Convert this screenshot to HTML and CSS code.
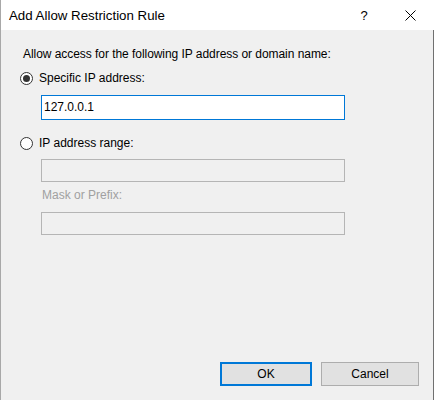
FILE: index.html
```html
<!DOCTYPE html>
<html>
<head>
<meta charset="utf-8">
<link rel="stylesheet" href="styles.css">
</head>
<body>
<div class="window">
  <div class="titlebar">
    <span class="title">Add Allow Restriction Rule</span>
    <span class="help">?</span>
    <span class="close">
      <svg width="11" height="11" viewBox="0 0 11 11"><path d="M0.5 0.5 L10.5 10.5 M10.5 0.5 L0.5 10.5" stroke="#000" stroke-width="1" fill="none"/></svg>
    </span>
  </div>
  <div class="body">
    <div class="form">
      <p class="prompt">Allow access for the following IP address or domain name:</p>
      <label class="radio"><span class="circle checked"></span><span>Specific IP address:</span></label>
      <div class="field active">127.0.0.1</div>
      <label class="radio second"><span class="circle"></span><span>IP address range:</span></label>
      <div class="field disabled first-range"></div>
      <p class="sub">Mask or Prefix:</p>
      <div class="field disabled mask"></div>
    </div>
    <div class="buttons">
      <button class="btn ok">OK</button>
      <button class="btn cancel">Cancel</button>
    </div>
  </div>
</div>
</body>
</html>
```
FILE: styles.css
```css
* { box-sizing: border-box; }
html, body { margin: 0; padding: 0; }
body {
  font-family: "Liberation Sans", Arial, sans-serif;
  font-size: 12px;
  color: #000;
  background: #f0f0f0;
}
.window {
  width: 434px;
  height: 400px;
  border-left: 1px solid #a8a8a8;
  display: flex;
  flex-direction: column;
  background: #f0f0f0;
}
.titlebar {
  height: 30px;
  background: #fff;
  display: flex;
  align-items: center;
  padding-left: 8px;
  flex: none;
}
.title {
  flex: 1;
  font-size: 13.3px;
}
.help {
  width: 46px;
  text-align: center;
  font-size: 13px;
  margin-right: 0;
}
.close {
  width: 46px;
  display: flex;
  justify-content: center;
  margin-right: 1px;
}
.body {
  flex: 1;
  display: flex;
  flex-direction: column;
  border-right: 1px solid #707070;
  padding: 16px 14px 14px 19px;
}
.form {
  display: flex;
  flex-direction: column;
  align-items: flex-start;
}
.prompt {
  margin: 0 0 8px 3px;
  line-height: 16px;
  letter-spacing: -0.05px;
}
.radio {
  display: flex;
  align-items: center;
  gap: 6px;
  line-height: 16px;
}
.radio.second { margin-top: 15px; }
.circle {
  width: 13px;
  height: 13px;
  border: 1px solid #333;
  border-radius: 50%;
  background: #fff;
  display: flex;
  align-items: center;
  justify-content: center;
}
.circle.checked::after {
  content: "";
  width: 7px;
  height: 7px;
  border-radius: 50%;
  background: #333;
}
.field {
  margin-left: 21px;
  width: 304px;
  height: 23px;
  border: 1px solid #b5b5b5;
  background: #f0f0f0;
  line-height: 21px;
  padding-left: 2px;
}
.field.active {
  height: 25px;
  line-height: 23px;
  margin-top: 9px;
  border-color: #0078d7;
  background: #fff;
}
.field.first-range { margin-top: 8px; }
.sub {
  margin: 5px 0 0 22px;
  line-height: 16px;
  color: #a0a0a0;
}
.field.mask { margin-top: 9px; }
.buttons {
  margin-top: auto;
  display: flex;
  justify-content: flex-end;
  gap: 9px;
}
.btn {
  font-family: inherit;
  font-size: 12px;
  color: #000;
  height: 24px;
  background: #e1e1e1;
  border: 1px solid #adadad;
  padding: 0;
  margin: 0;
}
.btn.ok {
  width: 92px;
  border: 2px solid #0078d7;
}
.btn.cancel { width: 98px; }
```
